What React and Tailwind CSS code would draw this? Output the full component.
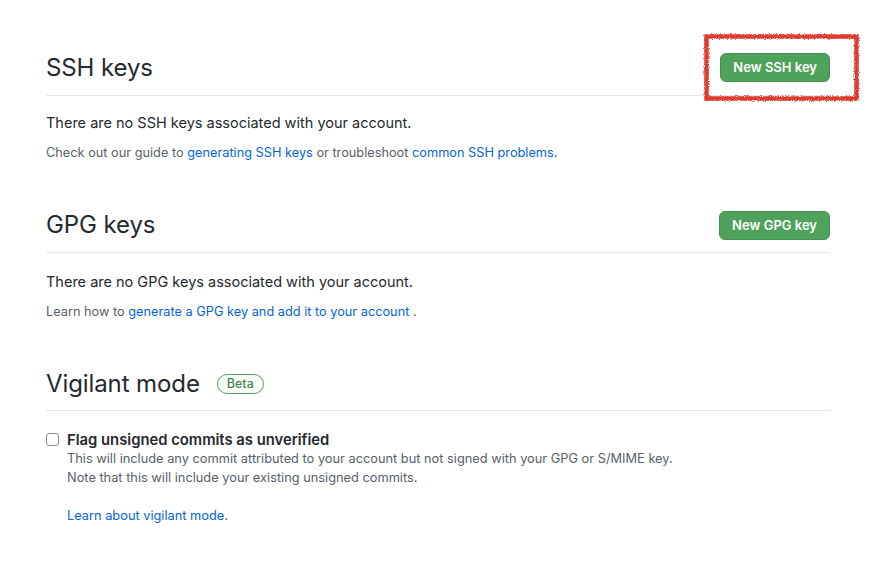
import React from "react";

const font = { fontFamily: "Inter, 'Liberation Sans', Arial, sans-serif" };

function GreenButton({ children }) {
  return (
    <button className="h-[29px] px-[12px] rounded-[6px] bg-[#4fa25a] border border-[#439150] text-white text-[13px] font-semibold leading-none">
      {children}
    </button>
  );
}

function Scribble() {
  return (
    <svg
      className="absolute -left-[17px] -top-[20px] pointer-events-none"
      width="157"
      height="69"
      viewBox="0 0 157 69"
    >
      <defs>
        <filter id="rough" x="-10%" y="-10%" width="120%" height="120%">
          <feTurbulence type="fractalNoise" baseFrequency="0.8" numOctaves="2" seed="3" />
          <feDisplacementMap in="SourceGraphic" scale="3.5" />
        </filter>
      </defs>
      <rect x="3.5" y="3.5" width="150" height="62" fill="none" stroke="#de3a2d" strokeWidth="4.5" filter="url(#rough)" />
    </svg>
  );
}

export default function App() {
  return (
    <div className="w-[878px] h-[574px] bg-white overflow-hidden" style={font}>
      <div className="ml-[46px] w-[784px] text-[#24292e]">
        {/* SSH keys */}
        <div className="mt-[53px] flex items-center justify-between pb-[13px] border-b border-[#e1e4e8]">
          <h2 className="text-[24px] leading-[29px] font-normal tracking-[-0.1px]">SSH keys</h2>
          <div className="relative">
            <GreenButton>New SSH key</GreenButton>
            <Scribble />
          </div>
        </div>
        <p className="mt-[17px] text-[14.5px] leading-[20px]">There are no SSH keys associated with your account.</p>
        <p className="mt-[10px] text-[12.75px] leading-[20px] text-[#586069]">
          Check out our guide to <a className="text-[#0366d6]">generating SSH keys</a> or troubleshoot{" "}
          <a className="text-[#0366d6]">common SSH problems</a>.
        </p>

        {/* GPG keys */}
        <div className="mt-[47px] flex items-center justify-between pb-[12px] border-b border-[#e1e4e8]">
          <h2 className="text-[24px] leading-[30px] font-normal tracking-[-0.1px]">GPG keys</h2>
          <div className="h-[30px] flex items-center">
            <GreenButton>New GPG key</GreenButton>
          </div>
        </div>
        <p className="mt-[19px] text-[14.5px] leading-[20px]">There are no GPG keys associated with your account.</p>
        <p className="mt-[10px] text-[12.75px] leading-[20px] text-[#586069]">
          Learn how to <a className="text-[#0366d6]">generate a GPG key and add it to your account</a> .
        </p>

        {/* Vigilant mode */}
        <div className="mt-[47px] flex items-center pb-[11px] border-b border-[#e1e4e8]">
          <h2 className="text-[24px] leading-[30px] font-normal tracking-[-0.1px]">Vigilant mode</h2>
          <span className="ml-[17px] h-[20px] px-[9px] flex items-center rounded-full border border-[#4fa25a] text-[#3e8a48] text-[12.5px] font-medium">
            Beta
          </span>
        </div>
        <div className="mt-[19px] flex items-start">
          <span className="mt-[3px] w-[13px] h-[13px] rounded-[3px] border border-[#8a8a8a] bg-white shrink-0" />
          <div className="ml-[8px]">
            <p className="text-[14.8px] leading-[20px] font-semibold">Flag unsigned commits as unverified</p>
            <p className="text-[12.8px] leading-[18.5px] text-[#586069]">
              This will include any commit attributed to your account but not signed with your GPG or S/MIME key.
            </p>
            <p className="text-[12.8px] leading-[18.5px] text-[#586069]">
              Note that this will include your existing unsigned commits.
            </p>
            <p className="mt-[20px] text-[12.8px] leading-[18px] text-[#586069]">
              <a className="text-[#0366d6]">Learn about vigilant mode</a>.
            </p>
          </div>
        </div>
      </div>
    </div>
  );
}
